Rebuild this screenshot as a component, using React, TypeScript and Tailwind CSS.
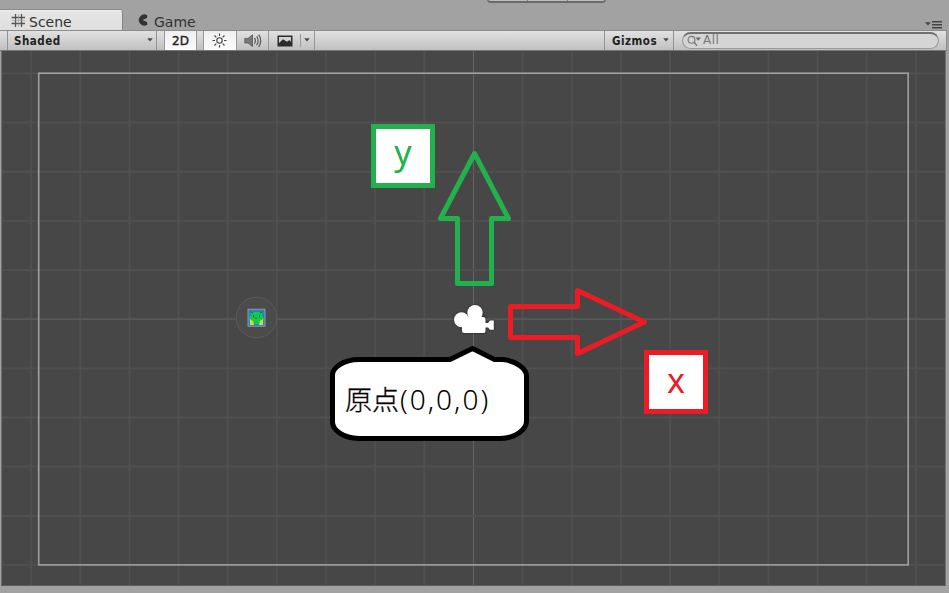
import React from 'react';

const STEP = 49.15;
const columns = Array.from({ length: 19 }, (_, i) => 473.5 + (i - 9) * STEP);
const rows = Array.from({ length: 11 }, (_, i) => 319.2 + (i - 5) * STEP);

function Caret({ className = '' }: { className?: string }) {
  return (
    <svg className={className} width="6" height="4" viewBox="0 0 6 4">
      <path d="M0.2 0.3H5.8L3 3.6Z" fill="#484848" />
    </svg>
  );
}

function Header() {
  return (
    <header className="relative flex h-[30px] items-end bg-[#a2a2a2] text-[14px] leading-[20px] text-[#333]">
      <div className="flex h-[20px] w-[123px] items-center rounded-tr-[3px] border-t border-r border-t-[#eeeeee] border-r-[#858585] bg-gradient-to-b from-[#e5e5e5] to-[#dfdfdf] pt-[3px] pl-[11px] shadow-[0_-1px_0_#8b8b8b]">
        <svg width="15" height="15" viewBox="0 0 15 15" className="mt-[-4px] shrink-0">
          <path d="M4.5 1V14M10.5 1V14M0.5 4.5H14M0.5 10.5H14" stroke="#555" strokeWidth="1.3" />
          <path d="M7.5 1V14M0.5 7.5H14" stroke="#a0a0a0" strokeWidth="0.7" />
        </svg>
        <span className="ml-[3px]">Scene</span>
      </div>
      <div className="flex h-[20px] items-center pt-[3px] pl-[14px]">
        <svg width="12" height="12" viewBox="0 0 12 12" className="mt-[-4px]">
          <path d="M10.4 1.4A5.5 5.5 0 1 0 10.5 10.5L10 8L5.6 6L10 4Z" fill="#333" />
        </svg>
        <span className="ml-[5px]">Game</span>
      </div>
      <div className="absolute top-[-8px] left-[487px] flex h-[11px] w-[119px] rounded-b-[4px] border border-b-2 border-[#6a6a6a] bg-[#bdbdbd]">
        <div className="w-[40px] border-r border-[#777]" />
        <div className="w-[40px] border-r border-[#777]" />
      </div>
      <svg width="18" height="8" viewBox="0 0 18 8" className="mr-[6px] mb-[1px] ml-auto">
        <path d="M0 1.2H6L3 4.5Z" fill="#444" />
        <path d="M7 0.8H17M7 3.8H17M7 6.8H17" stroke="#444" strokeWidth="1.4" />
      </svg>
    </header>
  );
}

function Toolbar() {
  return (
    <div className="flex h-[21px] w-[947px] border-t border-r border-b border-t-[#8c8c8c] border-r-[#8c8c8c] border-b-[#777] bg-gradient-to-b from-[#e1e1e1] to-[#c0c0c0] font-['DejaVu_Sans_Condensed','DejaVu_Sans',sans-serif] text-[11.5px] leading-[20px] font-bold tracking-[0.5px] text-[#222]">
      <div className="ml-[7px] flex w-[150px] items-center border-r border-l border-[#929292] pr-[3px] pl-[6px]">
        <span>Shaded</span>
        <Caret className="mt-[-1px] ml-auto" />
      </div>
      <div className="ml-[7px] flex w-[33px] justify-center border-r border-l border-[#999] bg-gradient-to-b from-[#f0f0f0] to-[#fbfbfb] font-['DejaVu_Sans',sans-serif] text-[12px] font-normal tracking-normal text-[#222]">
        <span className="[-webkit-text-stroke:0.4px_#222]">2D</span>
      </div>
      <div className="ml-[6px] flex w-[33px] items-center justify-center border-l border-[#999] bg-gradient-to-b from-[#f0f0f0] to-[#fbfbfb]">
        <svg width="16" height="15" viewBox="0 0 16 15" fill="none" stroke="#444">
          <circle cx="7.5" cy="7.5" r="2.7" strokeWidth="1.1" />
          <path d="M7.5 0.5V3M7.5 12V14.5M0.5 7.5H3M12 7.5H14.5M2.5 2.5L4.3 4.3M10.7 10.7L12.5 12.5M12.5 2.5L10.7 4.3M4.3 10.7L2.5 12.5" strokeWidth="1.1" />
        </svg>
      </div>
      <div className="flex w-[33px] items-center justify-center border-r border-l border-[#999]">
        <svg width="18" height="16" viewBox="0 0 18 16" fill="none" stroke="#555">
          <path d="M0.8 5.5H4L8.5 1.8V13.5L4 10H0.8Z" fill="#777" strokeWidth="0.8" />
          <path d="M10.5 5Q12.3 7.7 10.5 10.5M12.7 3.3Q15.5 7.7 12.7 12.3M14.7 1.7Q18.8 7.7 14.7 14" strokeWidth="1.2" />
        </svg>
      </div>
      <div className="flex w-[46px] items-center border-r border-[#999] pl-[8px]">
        <svg width="16" height="12" viewBox="0 0 16 12">
          <rect x="0.5" y="0.5" width="15" height="11" fill="#2c2c2c" />
          <path d="M2 2H14V7L12.5 5L10 6.7L6 4.3L2 8Z" fill="#d3d3d3" />
        </svg>
        <div className="ml-[7px] h-[13px] w-px bg-[#999]" />
        <Caret className="mt-[-2px] ml-[3px]" />
      </div>
      <div className="ml-auto flex w-[70px] items-center border-r border-l border-[#929292] pr-[4px] pl-[7px]">
        <span>Gizmos</span>
        <Caret className="mt-[-2px] ml-auto" />
      </div>
      <div className="mt-[1px] mr-[7px] ml-[8px] flex h-[17px] w-[257px] items-center rounded-full border border-t-2 border-[#9a9a9a] border-t-[#707070] bg-[#d5d5d5] pl-[4px] font-['DejaVu_Sans',sans-serif] text-[12px] font-normal text-[#777]">
        <svg width="15" height="12" viewBox="0 0 15 12" fill="none">
          <circle cx="4.5" cy="4.8" r="3.4" stroke="#777" strokeWidth="1.1" />
          <path d="M7 7.3L10 10.8" stroke="#777" strokeWidth="1.4" />
          <path d="M8.5 2.5H14L11.2 5.8Z" fill="#666" />
        </svg>
        <span className="mt-[-3px] ml-px">All</span>
      </div>
    </div>
  );
}

function SceneView() {
  return (
    <main className="relative h-[535px]">
      <svg className="block" width="949" height="535" viewBox="0 51 949 535">
        <rect x="1" y="51" width="945" height="535" fill="#474747" />
        {columns.map((x) => (
          <path key={x} d={`M${x} 51V586`} stroke={x === 473.5 ? '#666' : '#505050'} strokeWidth={x === 473.5 ? 1 : 1.8} />
        ))}
        {rows.map((y, i) => (
          <path key={y} d={`M1 ${y}H946`} stroke={i === 5 ? '#585858' : '#505050'} strokeWidth="1.8" />
        ))}
        <path d="M1.5 51V585M945.5 51V585" stroke="#707070" />
        <path d="M1 585.5H946" stroke="#5c5c5c" />
        <rect x="38.7" y="73.2" width="869.5" height="491.7" fill="none" stroke="#a0a0a0" strokeWidth="1.6" />

        <circle cx="256.5" cy="317.5" r="20.3" fill="#4b4b4b" stroke="#5b5b5b" />
        <rect x="248" y="309.2" width="17" height="17" fill="#287bd4" stroke="#b0a89c" strokeWidth="0.8" />
        <path d="M250 311L253 312H260L263 311L262 315L264 319L262 324H251L249 319L251 315Z" fill="#16c94c" />
        <path d="M250 319L253 321L254 325H250ZM263 319L260 321L259 325H263Z" fill="#d5db31" />
        <path d="M250.5 311.5L253 313M262.5 311.5L260 313M253.5 315V317.5M259.5 315V317.5M256 317.5V319" stroke="#087340" strokeWidth="1.1" />

        <g fill="#fff" className="drop-shadow-[0_0_1px_#222]">
          <circle cx="461.5" cy="319.8" r="7.5" />
          <circle cx="475" cy="312.7" r="7.7" />
          <path d="M463 317H483Q485.5 317 485.5 320V323H488L490 320.5H493.8V329.8H490L488 327.5H485.5V331Q485.5 333 483.5 333H464Q462 333 462 331V319Z" />
        </g>

        <path d="M474.5 153.5L440.5 218.5H457.5V283.5H491.5V218.5H508.5Z" fill="none" stroke="#22b14c" strokeWidth="5" strokeLinejoin="round" />
        <path d="M510.5 306.5H577.5V290.5L644.5 322L577.5 353.5V337.5H510.5Z" fill="none" stroke="#ed1c24" strokeWidth="5" strokeLinejoin="round" />
        <path d="M450 359.5L472.5 348.5L494.5 359.5H503C517 361 526.5 369 526.5 376V421C526.5 429 516 438.5 500 438.5H359C343 438 332.5 430 332.5 422V375C332.5 368 343 359.5 359 359.5Z" fill="#fff" stroke="#000" strokeWidth="5" strokeLinejoin="round" />
      </svg>
      <div className="absolute top-[73px] left-[371px] flex h-[64px] w-[64px] justify-center border-[5px] border-[#22b14c] bg-white font-['Noto_Sans',sans-serif] text-[34px] leading-[47px] text-[#22b14c]">
        <span>y</span>
      </div>
      <div className="absolute top-[299px] left-[644px] flex h-[64px] w-[64px] justify-center border-[5px] border-[#ed1c24] bg-white font-['Noto_Sans',sans-serif] text-[34px] leading-[51px] text-[#ed1c24]">
        <span>x</span>
      </div>
      <div className="absolute top-[328px] left-[345px] flex items-center whitespace-nowrap text-black">
        <span className="font-['Noto_Sans_CJK_JP',sans-serif] text-[27px] leading-[40px] font-light [-webkit-text-stroke:0.3px_#000]">原点</span>
        <span className="ml-px font-['Noto_Sans',sans-serif] text-[28px] leading-[39px] font-light tracking-[2px]">(0,0,0)</span>
      </div>
    </main>
  );
}

export default function App() {
  return (
    <div className="h-[593px] w-[949px] overflow-hidden bg-[#a2a2a2] font-['DejaVu_Sans',sans-serif]">
      <Header />
      <Toolbar />
      <SceneView />
    </div>
  );
}
